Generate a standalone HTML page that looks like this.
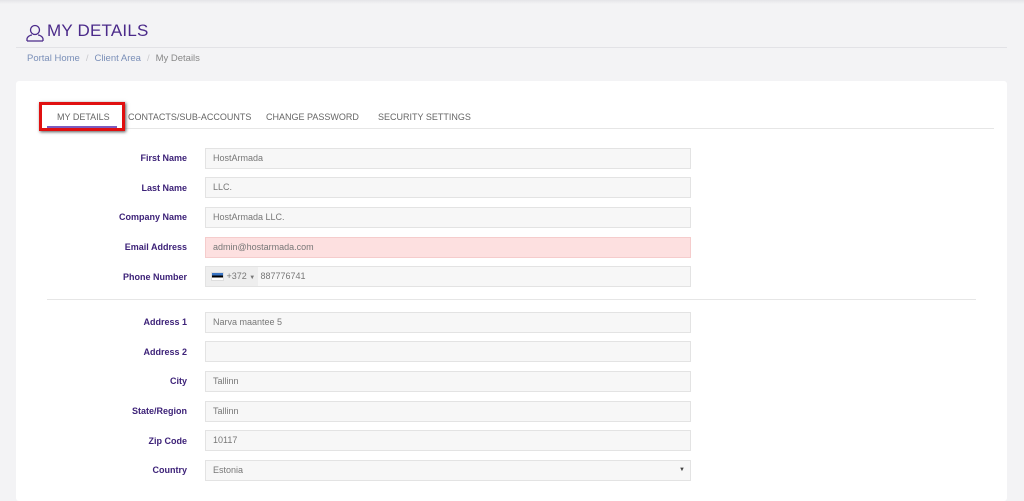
<!DOCTYPE html>
<html><head><style>
*{box-sizing:border-box}
body{margin:0;width:1024px;height:492px;background:#f3f3f5;font-family:"Liberation Sans",sans-serif;overflow:hidden;position:relative}
.top{position:absolute;left:0;top:0;width:1024px;height:4px;background:linear-gradient(#e4e4e8,#f3f3f5)}
h1{position:absolute;left:47px;top:21px;margin:0;font-size:17px;font-weight:normal;color:#4b2a8a;letter-spacing:.2px}
.hl{position:absolute;left:16px;top:47px;width:991px;height:1px;background:#e2e2e6}
.bc{position:absolute;left:27px;top:53px;font-size:9.5px;color:#7a8fb8}
.bc span{color:#c8c8cc;margin:0 6px}.bc b{font-weight:normal;color:#888}
.card{position:absolute;left:16px;top:81px;width:991px;height:420px;background:#fff;border-radius:3px}
.tabs{position:absolute;left:46px;top:128px;width:948px;height:1px;background:#e6e6e6}
.tab{position:absolute;top:112px;font-size:9px;color:#666}
.red{position:absolute;left:39px;top:102px;width:86px;height:29px;border:3px solid #e01010;box-shadow:1px 1px 3px #555}
.ul{position:absolute;left:47px;top:126px;width:70px;height:2px;background:#7b5cc0}
.lab{position:absolute;width:187px;left:0;text-align:right;font-size:9px;font-weight:bold;color:#3d2278}
.in{position:absolute;left:205px;width:486px;height:21px;border:1px solid #e3e3e3;background:#f7f7f7;font-size:9px;color:#777;line-height:19px;padding-left:7px}
.sep{position:absolute;left:47px;top:299px;width:929px;height:1px;background:#e6e6e6}
</style></head><body>
<div class="top"></div>
<svg style="position:absolute;left:26px;top:24px" width="18" height="18" viewBox="0 0 18 18" fill="none" stroke="#4b2a8a" stroke-width="1.3"><circle cx="9" cy="6" r="4.5"/><path d="M1 17v-2c0-2 3-4 5-4M17 17v-2c0-2-3-4-5-4M1 17h16"/></svg>
<h1>MY DETAILS</h1>
<div class="hl"></div>
<div class="bc">Portal Home<span>/</span>Client Area<span>/</span><b>My Details</b></div>
<div class="card"></div>
<div class="tabs"></div>
<div class="tab" style="left:57px">MY DETAILS</div>
<div class="tab" style="left:128px">CONTACTS/SUB-ACCOUNTS</div>
<div class="tab" style="left:266px">CHANGE PASSWORD</div>
<div class="tab" style="left:378px">SECURITY SETTINGS</div>
<div class="ul"></div>
<div class="red"></div>

<div class="lab" style="top:153px">First Name</div><div class="in" style="top:148px">HostArmada</div>
<div class="lab" style="top:183px">Last Name</div><div class="in" style="top:177px">LLC.</div>
<div class="lab" style="top:212px">Company Name</div><div class="in" style="top:207px">HostArmada LLC.</div>
<div class="lab" style="top:242px">Email Address</div><div class="in" style="top:237px;background:#fde0e0;border-color:#f5cccc">admin@hostarmada.com</div>
<div class="lab" style="top:272px">Phone Number</div><div class="in" style="top:266px;padding-left:0"><span style="display:inline-block;width:52px;background:#eee;padding-left:5px;height:19px;vertical-align:top"><span style="display:inline-block;width:13px;height:9px;background:linear-gradient(#3a75c4 33%,#000 33%,#000 66%,#fff 66%);vertical-align:middle;border:1px solid #ddd"></span> +372 <span style="font-size:6px">▼</span></span> 887776741</div>
<div class="sep"></div>
<div class="lab" style="top:317px">Address 1</div><div class="in" style="top:312px">Narva maantee 5</div>
<div class="lab" style="top:347px">Address 2</div><div class="in" style="top:341px"></div>
<div class="lab" style="top:376px">City</div><div class="in" style="top:371px">Tallinn</div>
<div class="lab" style="top:406px">State/Region</div><div class="in" style="top:401px">Tallinn</div>
<div class="lab" style="top:436px">Zip Code</div><div class="in" style="top:430px">10117</div>
<div class="lab" style="top:465px">Country</div><div class="in" style="top:460px">Estonia<span style="position:absolute;right:5px;font-size:6px;color:#444">▼</span></div>
</body></html>
